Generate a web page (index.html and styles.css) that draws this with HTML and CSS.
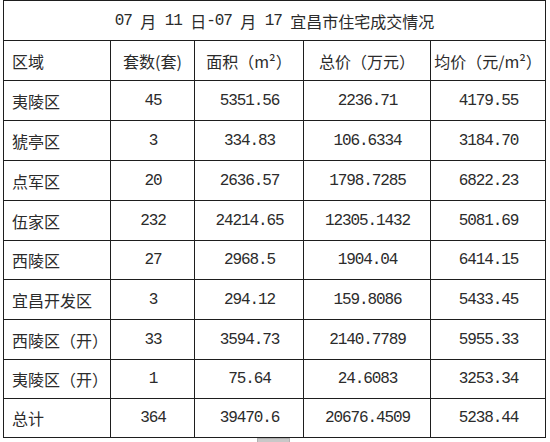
FILE: index.html
```html
<!DOCTYPE html>
<html lang="zh">
<head>
<meta charset="utf-8">
<title>宜昌市住宅成交情况</title>
<link rel="stylesheet" href="styles.css">
</head>
<body>
<div class="sheet">
  <div class="table">
    <div class="cell title"><span class="d">07 </span>月<span class="d"> 11 </span>日<span class="d">-07 </span>月<span class="d"> 17 </span>宜昌市住宅成交情况</div>

    <div class="cell name">区域</div>
    <div class="cell">套数(套)</div>
    <div class="cell">面积（m²）</div>
    <div class="cell">总价（万元）</div>
    <div class="cell">均价（元/m²）</div>

    <div class="cell name">夷陵区</div>
    <div class="cell n">45</div>
    <div class="cell n">5351.56</div>
    <div class="cell n">2236.71</div>
    <div class="cell n">4179.55</div>

    <div class="cell name">猇亭区</div>
    <div class="cell n">3</div>
    <div class="cell n">334.83</div>
    <div class="cell n">106.6334</div>
    <div class="cell n">3184.70</div>

    <div class="cell name">点军区</div>
    <div class="cell n">20</div>
    <div class="cell n">2636.57</div>
    <div class="cell n">1798.7285</div>
    <div class="cell n">6822.23</div>

    <div class="cell name">伍家区</div>
    <div class="cell n">232</div>
    <div class="cell n">24214.65</div>
    <div class="cell n">12305.1432</div>
    <div class="cell n">5081.69</div>

    <div class="cell name">西陵区</div>
    <div class="cell n">27</div>
    <div class="cell n">2968.5</div>
    <div class="cell n">1904.04</div>
    <div class="cell n">6414.15</div>

    <div class="cell name">宜昌开发区</div>
    <div class="cell n">3</div>
    <div class="cell n">294.12</div>
    <div class="cell n">159.8086</div>
    <div class="cell n">5433.45</div>

    <div class="cell name">西陵区（开）</div>
    <div class="cell n">33</div>
    <div class="cell n">3594.73</div>
    <div class="cell n">2140.7789</div>
    <div class="cell n">5955.33</div>

    <div class="cell name">夷陵区（开）</div>
    <div class="cell n">1</div>
    <div class="cell n">75.64</div>
    <div class="cell n">24.6083</div>
    <div class="cell n">3253.34</div>

    <div class="cell name">总计</div>
    <div class="cell n">364</div>
    <div class="cell n">39470.6</div>
    <div class="cell n">20676.4509</div>
    <div class="cell n">5238.44</div>
  </div>
  <div class="thumb"></div>
</div>
</body>
</html>
```
FILE: styles.css
```css
html, body {
  margin: 0;
  padding: 0;
  background: #ffffff;
}

body {
  width: 550px;
  height: 442px;
  overflow: hidden;
  font-family: "Noto Sans CJK SC", sans-serif;
  font-size: 16px;
  color: #2b2b2b;
}

.sheet {
  padding: 1px 0 0 3px;
}

.table {
  display: grid;
  grid-template-columns: 107px 84px 109px 127px 115px;
  grid-template-rows: 40px 40px 40px 40px 40px 40px 39px 40px 40px 39px 39px;
  width: max-content;
  border-top: 1px solid #1e1e1e;
  border-left: 1px solid #1e1e1e;
  margin-top: -1px;
}

.cell {
  display: flex;
  align-items: center;
  justify-content: center;
  border-right: 1px solid #1e1e1e;
  border-bottom: 1px solid #1e1e1e;
  white-space: nowrap;
  line-height: 1;
}

.title {
  grid-column: 1 / -1;
  padding-top: 1px;
}

.name {
  justify-content: flex-start;
  padding-left: 8px;
}

.n,
.d {
  font-family: "Liberation Mono", monospace;
  font-size: 16px;
  letter-spacing: -1.1px;
}

.n {
  padding-left: 1px;
}

.d {
  white-space: pre;
}

.thumb {
  width: 33px;
  height: 4px;
  margin: 0 0 0 254px;
  background: #c8c8c8;
  border: 1px solid #b0b0b0;
  border-bottom: none;
  box-sizing: border-box;
}
```
